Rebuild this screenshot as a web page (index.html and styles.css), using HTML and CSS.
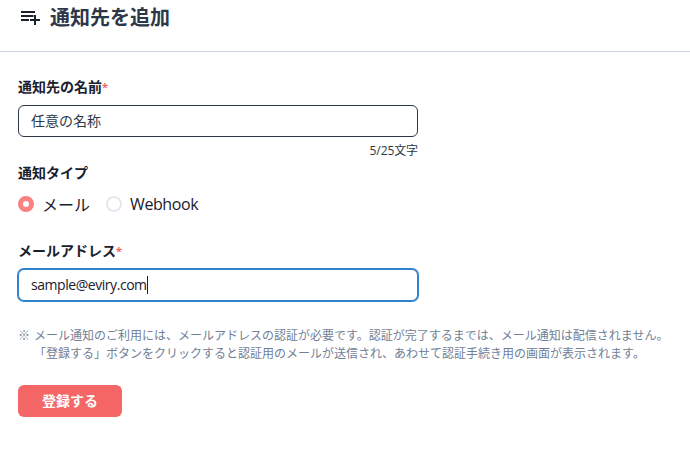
FILE: index.html
```html
<!DOCTYPE html>
<html lang="ja">
<head>
<meta charset="utf-8">
<title>通知先を追加</title>
<link rel="stylesheet" href="styles.css">
</head>
<body>
<header class="header">
  <svg class="header-icon" width="24" height="24" viewBox="0 0 24 24" aria-hidden="true"><path d="M3 7h14v2H3zM3 11h12.5v2H3zM3 15h8v2H3zM16 11h2v4h4v2h-4v4h-2v-4h-4v-2h4z" fill="#1a202c"/></svg>
  <h1 class="title">通知先を追加</h1>
</header>
<main class="form">
  <div class="label">通知先の名前<span class="req">*</span></div>
  <div class="input input-name">任意の名称</div>
  <div class="counter">5/25文字</div>
  <div class="label label-type">通知タイプ</div>
  <div class="radios">
    <span class="radio radio-on"></span><span class="radio-text">メール</span>
    <span class="radio radio-off"></span><span class="radio-text">Webhook</span>
  </div>
  <div class="label label-mail">メールアドレス<span class="req">*</span></div>
  <div class="input input-mail">sample@eviry.com<span class="caret"></span></div>
  <div class="note">
    <p class="note-line"><span class="mark">※</span>メール通知のご利用には、メールアドレスの認証が必要です。認証が完了するまでは、メール通知は配信されません。</p>
    <p class="note-line"><span class="mark"></span>「登録する」ボタンをクリックすると認証用のメールが送信され、あわせて認証手続き用の画面が表示されます。</p>
  </div>
  <button class="submit" type="button">登録する</button>
</main>
</body>
</html>
```
FILE: styles.css
```css
* { box-sizing: border-box; }
html, body { margin: 0; padding: 0; background: #fff; }
body {
  width: 690px;
  height: 450px;
  overflow: hidden;
  font-family: "Open Sans", "Noto Sans CJK JP", sans-serif;
  color: #2d3748;
}
.header {
  height: 52px;
  border-bottom: 1px solid #cbd5e0;
  display: flex;
  align-items: flex-start;
  padding: 4px 0 0 18px;
  gap: 8px;
}
.header-icon { display: block; }
.title {
  margin: 0;
  font-size: 20px;
  line-height: 28px;
  font-weight: 700;
}
.form { padding: 25px 0 0 18px; width: 418px; }
.label {
  font-size: 14px;
  font-weight: 700;
  line-height: 20px;
  color: #1a202c;
}
.req { color: #f56565; font-size: 11px; vertical-align: 1px; }
.input {
  margin-top: 8px;
  width: 400px;
  height: 32px;
  border-radius: 6px;
  padding: 0 12px;
  font-size: 14px;
  line-height: 30px;
  background: #fff;
  border: 1px solid #2d3748;
}
.input-mail {
  border-color: #3182ce;
  box-shadow: 0 0 0 1px #3182ce;
  display: flex;
  align-items: center;
  letter-spacing: -0.45px;
  color: #1a202c;
}
.caret { display: inline-block; width: 1px; height: 18px; background: #1a202c; }
.counter {
  font-size: 12px;
  line-height: 16px;
  text-align: right;
  margin-top: 6px;
  width: 400px;
  letter-spacing: -0.1px;
}
.label-type { margin-top: 4px; }
.radios {
  display: flex;
  align-items: center;
  height: 24px;
  margin-top: 9px;
  font-size: 16px;
  color: #1a202c;
}
.radio {
  width: 16px;
  height: 16px;
  border-radius: 50%;
  display: block;
  flex: none;
}
.radio-on { background: #fff; border: 5px solid #fc8181; }
.radio-off { background: #fff; border: 2px solid #e2e8f0; margin-left: 16px; }
.radio-text { margin-left: 8px; }
.radio-text:last-child { letter-spacing: -0.4px; }
.label-mail { margin-top: 25px; }
.note { margin-top: 26px; width: 660px; }
.note-line {
  margin: 0;
  font-size: 12px;
  line-height: 18px;
  color: #718096;
  white-space: nowrap;
}
.mark { display: inline-block; width: 16px; }
.submit {
  display: block;
  margin-top: 22px;
  width: 104px;
  height: 32px;
  border: 0;
  border-radius: 6px;
  background: #f56767;
  color: #fff;
  padding: 0 0 2px;
  font: 700 14px "Open Sans", "Noto Sans CJK JP", sans-serif;
}
```
